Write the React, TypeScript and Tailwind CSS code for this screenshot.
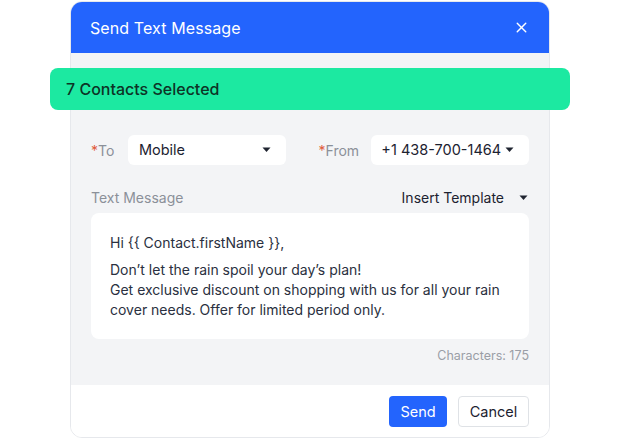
import { X } from "lucide-react";

function Caret() {
  return (
    <svg width="9" height="6" viewBox="0 0 9 6" className="shrink-0">
      <path d="M0.5 0.5h8L4.5 5z" fill="#1f2430" />
    </svg>
  );
}

function Select({ value, width, pl }: { value: string; width: string; pl: string }) {
  return (
    <div className={`flex h-[30px] items-center justify-between rounded-md bg-white pr-[15px] text-[14.5px] text-[#1c2230] ${width} ${pl}`}>
      <span>{value}</span>
      <Caret />
    </div>
  );
}

export default function App() {
  return (
    <div
      className="relative h-[440px] w-[620px] bg-white"
      style={{ fontFamily: "Inter, 'Noto Sans', sans-serif" }}
    >
      <div className="absolute left-[70px] top-[1px] flex h-[437px] w-[480px] flex-col overflow-hidden rounded-[12px] border border-[#e6e8ec] bg-white">
        {/* header */}
        <div className="flex h-[51px] shrink-0 items-center justify-between bg-[#2364fd] pl-[19px] pr-[19px] text-white">
          <span className="text-[16px] tracking-[0.1px]">Send Text Message</span>
          <X className="h-[17px] w-[17px]" strokeWidth={2} />
        </div>

        {/* body */}
        <div className="flex flex-1 flex-col bg-[#f3f4f6] px-[20px] pt-[82px]">
          <div className="flex items-center">
            <span className="w-[37px] text-[14px] text-[#8b9099]">
              <span className="text-[#e05a3a]">*</span>To
            </span>
            <Select value="Mobile" width="w-[158px]" pl="pl-[11px]" />
            <span className="ml-[33px] w-[53px] text-[14px] text-[#8b9099]">
              <span className="text-[#e05a3a]">*</span>From
            </span>
            <Select value="+1 438-700-1464" width="w-[158px]" pl="pl-[10px]" />
          </div>

          <div className="mt-[22px] flex items-center justify-between text-[14px]">
            <span className="text-[#8b9099]">Text Message</span>
            <span className="flex items-center gap-[15px] pr-[1px] text-[#1c2230]">
              Insert Template
              <Caret />
            </span>
          </div>

          <div className="mt-[5px] h-[126px] rounded-[8px] bg-white px-[19px] pt-[20px] text-[14px] leading-[20px] text-[#2a3040]">
            <p>Hi {"{{"} Contact.firstName {"}}"},</p>
            <p className="mt-[7px]">Don’t let the rain spoil your day’s plan!</p>
            <p>Get exclusive discount on shopping with us for all your rain cover needs. Offer for limited period only.</p>
          </div>

          <div className="mt-[8px] text-right text-[12.5px] text-[#9a9ea6]">Characters: 175</div>
        </div>

        {/* footer */}
        <div className="flex h-[52px] shrink-0 items-start justify-end gap-[11px] bg-white pr-[20px] pt-[11px]">
          <button className="h-[31px] w-[58px] rounded-[4px] bg-[#2364fd] text-[14.5px] text-white">Send</button>
          <button className="h-[31px] w-[71px] rounded-[4px] border border-[#dfe2e6] bg-white text-[14.5px] text-[#1c2230]">Cancel</button>
        </div>
      </div>

      {/* banner */}
      <div className="absolute left-[50px] top-[68px] flex h-[42px] w-[520px] items-center rounded-[8px] bg-[#1ce9a1] pl-[16px] text-[16px] font-medium text-[#0d3326]">
        7 Contacts Selected
      </div>
    </div>
  );
}
